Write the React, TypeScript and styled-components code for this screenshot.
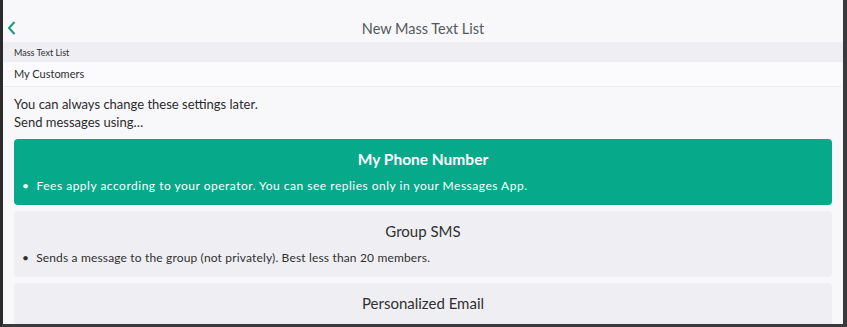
import React from 'react';
import styled, { createGlobalStyle } from 'styled-components';

const GlobalStyle = createGlobalStyle`
  html, body { margin: 0; padding: 0; background: #2a2a2c; }
  body { font-family: Lato, "Noto Sans", sans-serif; }
`;

const Frame = styled.div`
  width: 847px;
  height: 327px;
  box-sizing: border-box;
  border-left: 3px solid #2a2a2c;
  border-right: 4px solid #3a3a3c;
  border-bottom: 3px solid #3a3a3c;
  background: #f8f8fa;
  overflow: hidden;
  display: flex;
  flex-direction: column;
  & > * { flex-shrink: 0; }
`;

const NavBar = styled.div`
  height: 42px;
  display: grid;
  grid-template-columns: 40px 1fr 40px;
  align-items: center;
  padding-top: 14px;
  box-sizing: border-box;
`;

const BackButton = styled.div`
  display: flex;
  align-items: center;
  padding-left: 4px;
`;

const Title = styled.div`
  text-align: center;
  font-size: 14.5px;
  color: #54595d;
`;

const SectionHeader = styled.div`
  background: #efeff3;
  height: 20px;
  padding-left: 11px;
  font-size: 9px;
  color: #2e2e30;
  display: flex;
  align-items: flex-end;
  padding-bottom: 4px;
  box-sizing: border-box;
`;

const InputRow = styled.div`
  background: #fbfbfd;
  height: 25px;
  box-sizing: border-box;
  margin-right: 2px;
  padding-left: 11px;
  padding-bottom: 1px;
  display: flex;
  align-items: center;
  font-size: 11px;
  color: #2e2e30;
  border-bottom: 1px solid #ececf0;
`;

const Intro = styled.div`
  padding: 8px 11px 8px;
  font-size: 13px;
  line-height: 18px;
  color: #2b2b2d;
`;

const Options = styled.div`
  display: flex;
  flex-direction: column;
  gap: 6px;
  padding: 0 11px 0 11px;
`;

const OptionCard = styled.div<{ $active?: boolean }>`
  background: ${p => (p.$active ? '#06a98a' : '#efeff3')};
  color: ${p => (p.$active ? '#ffffff' : '#2f2f31')};
  border-radius: 4px;
  height: 66px;
  flex-shrink: 0;
  display: flex;
  flex-direction: column;
  padding: 0 8px;
  box-sizing: border-box;
`;

const OptionTitle = styled.div<{ $active?: boolean }>`
  text-align: center;
  font-size: ${p => (p.$active ? '15.5px' : '15px')};
  font-weight: ${p => (p.$active ? 700 : 400)};
  margin-top: 11px;
  line-height: 18px;
`;

const Bullet = styled.div<{ $active?: boolean }>`
  font-size: 12px;
  letter-spacing: ${p => (p.$active ? '0.5px' : '0.16px')};
  margin-top: 10px;
  line-height: 15px;
  &::before {
    content: '•';
    margin-right: 7px;
  }
`;

const options = [
  {
    title: 'My Phone Number',
    text: 'Fees apply according to your operator. You can see replies only in your Messages App.',
    active: true,
  },
  {
    title: 'Group SMS',
    text: 'Sends a message to the group (not privately). Best less than 20 members.',
  },
  { title: 'Personalized Email', text: '' },
];

export default function App() {
  return (
    <>
      <GlobalStyle />
      <Frame>
        <NavBar>
          <BackButton>
            <svg width="10" height="14" viewBox="0 0 10 14">
              <path d="M7 1.5 L2 7 L7 12.5" fill="none" stroke="#1a9c82" strokeWidth="2" strokeLinecap="round" strokeLinejoin="round" />
            </svg>
          </BackButton>
          <Title>New Mass Text List</Title>
          <div />
        </NavBar>
        <SectionHeader>Mass Text List</SectionHeader>
        <InputRow>My Customers</InputRow>
        <Intro>
          You can always change these settings later.
          <br />
          Send messages using…
        </Intro>
        <Options>
          {options.map(o => (
            <OptionCard key={o.title} $active={o.active}>
              <OptionTitle $active={o.active}>{o.title}</OptionTitle>
              {o.text && <Bullet $active={o.active}>{o.text}</Bullet>}
            </OptionCard>
          ))}
        </Options>
      </Frame>
    </>
  );
}
